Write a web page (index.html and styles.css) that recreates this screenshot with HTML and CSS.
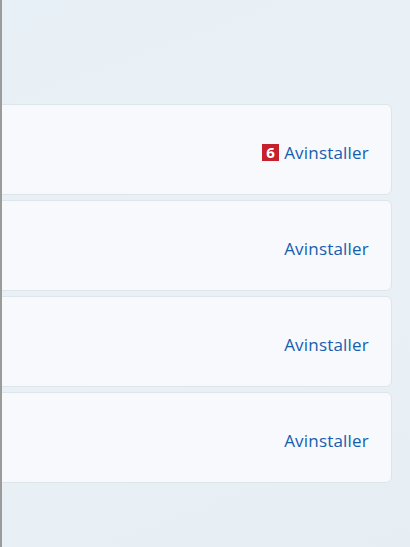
FILE: index.html
```html
<!DOCTYPE html>
<html lang="no">
<head>
<meta charset="utf-8">
<link rel="stylesheet" href="styles.css">
</head>
<body>
<div class="page">
  <div class="list">
    <div class="card"><span class="badge">6</span><span class="action">Avinstaller</span></div>
    <div class="card"><span class="action">Avinstaller</span></div>
    <div class="card"><span class="action">Avinstaller</span></div>
    <div class="card"><span class="action">Avinstaller</span></div>
  </div>
</div>
</body>
</html>
```
FILE: styles.css
```css
html, body {
  margin: 0;
  padding: 0;
  width: 410px;
  height: 547px;
  overflow: hidden;
}
body {
  font-family: "Open Sans", "Noto Sans", sans-serif;
  background: linear-gradient(160deg, #e8f0f7 0%, #e9f1f6 60%, #e6eef4 100%);
}
.page {
  height: 547px;
  box-sizing: border-box;
  border-left: 2px solid #9b9b9b;
  padding-top: 104px;
  padding-right: 18px;
  overflow: hidden;
}
.list {
  display: flex;
  flex-direction: column;
  gap: 5px;
  margin-left: -12px;
}
.card {
  height: 91px;
  box-sizing: border-box;
  background: #f7f9fc;
  border: 1px solid #dde5eb;
  border-radius: 6px;
  display: flex;
  align-items: center;
  justify-content: flex-end;
  padding-right: 22px;
  padding-top: 5px;
  gap: 5px;
}
.badge {
  width: 17px;
  height: 17px;
  background: #c5202b;
  color: #fff;
  font-weight: 700;
  font-size: 15px;
  line-height: 17px;
  text-align: center;
  font-family: "Open Sans", sans-serif;
}
.action {
  color: #155eaf;
  font-size: 17px;
  letter-spacing: 0.2px;
  font-weight: 500;
}
```
